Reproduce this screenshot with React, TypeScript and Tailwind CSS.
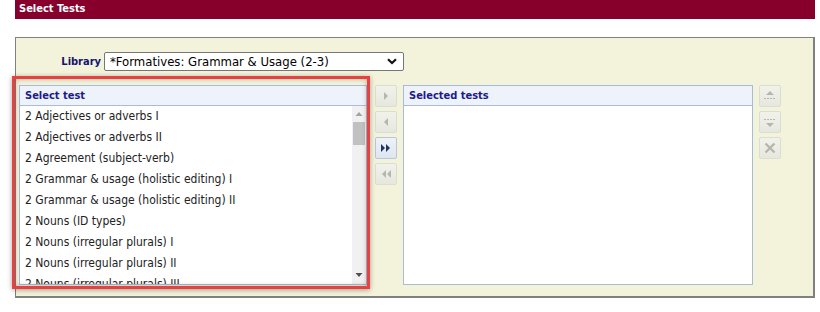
import React from "react";

const items = [
  "2 Adjectives or adverbs I",
  "2 Adjectives or adverbs II",
  "2 Agreement (subject-verb)",
  "2 Grammar & usage (holistic editing) I",
  "2 Grammar & usage (holistic editing) II",
  "2 Nouns (ID types)",
  "2 Nouns (irregular plurals) I",
  "2 Nouns (irregular plurals) II",
  "2 Nouns (irregular plurals) III",
  "2 Nouns (possessives)",
  "2 Pronouns I",
];

function Btn({ active, children }: { active?: boolean; children: React.ReactNode }) {
  return (
    <div
      className={
        "w-[22px] h-[22px] rounded-[2px] border flex items-center justify-center " +
        (active
          ? "border-[#B9C6D8] bg-gradient-to-b from-[#EEF2F8] to-[#DEE6F1]"
          : "border-[#DADDD2] bg-gradient-to-b from-[#F1F2EA] to-[#E6E8DF]")
      }
    >
      {children}
    </div>
  );
}

const G = "#B5B7AD";
const N = "#1C3561";

export default function App() {
  return (
    <div
      className="w-[820px] h-[312px] bg-white overflow-hidden text-[11px] text-[#222]"
      style={{ fontFamily: '"DejaVu Sans Condensed", "DejaVu Sans", Tahoma, sans-serif' }}
    >
      <div className="ml-[15px] mr-[5px] h-[19px] bg-[#87002B] text-white font-bold text-[11px] pl-[4px] flex items-center">
        Select Tests
      </div>
      <div className="ml-[15px] mr-[5px] mt-[18px] h-[261px] border-t border-l border-r-2 border-b-2 border-[#808080] bg-[#F3F3DB] pl-[3px]">
        <div className="flex items-center mt-[14px] h-[19px]">
          <div className="w-[82px] text-right font-bold text-[#14146E] pt-[1px]">Library</div>
          <div className="ml-[3px] w-[300px] h-[19px] bg-white border border-[#767676] rounded-[2px] flex items-center pl-[5px] pr-[6px] text-[13px] text-black">
            <span className="flex-1 truncate">*Formatives: Grammar &amp; Usage (2-3)</span>
            <svg width="10" height="7" viewBox="0 0 10 7">
              <path d="M1 1.2 L5 5 L9 1.2" fill="none" stroke="#111" strokeWidth="2.2" />
            </svg>
          </div>
        </div>
        <div className="flex mt-[14px]">
          {/* left list */}
          <div className="relative w-[348px] h-[200px]">
            <div className="w-full h-full bg-white border border-[#A8BDD5] flex flex-col">
              <div className="h-[20px] shrink-0 bg-[#EEF2FB] border-b border-[#A8BDD5] pl-[5px] pt-[1px] flex items-center font-bold text-[#1B1B8A]">
                Select test
              </div>
              <div className="flex flex-1 min-h-0">
                <div className="flex-1 overflow-hidden">
                  {items.map((t) => (
                    <div key={t} className="h-[20.9px] pl-[5px] flex items-center text-[12px] whitespace-nowrap">
                      {t}
                    </div>
                  ))}
                </div>
                <div className="w-[14px] bg-[#F1F1F1] flex flex-col items-center">
                  <svg width="14" height="14" viewBox="0 0 14 14" className="mt-[1px]">
                    <path d="M3.5 9 L7 5 L10.5 9 Z" fill="#A3A3A3" />
                  </svg>
                  <div className="w-[12px] h-[23px] bg-[#C1C1C1] mt-[1px]" />
                  <div className="flex-1" />
                  <svg width="14" height="14" viewBox="0 0 14 14" className="mb-[2px]">
                    <path d="M3.5 5 L7 9 L10.5 5 Z" fill="#505050" />
                  </svg>
                </div>
              </div>
            </div>
            <div className="absolute top-[-9px] left-[-7px] right-[-3px] bottom-[-4px] border-[3px] border-[#E8413F] shadow-[inset_0_0_5px_rgba(0,0,0,0.28),0_1px_5px_rgba(0,0,0,0.35)] pointer-events-none" />
          </div>
          {/* move buttons */}
          <div className="ml-[8px] flex flex-col gap-[4px]">
            <Btn>
              <svg width="8" height="10" viewBox="0 0 8 10"><path d="M2 1 L6 5 L2 9 Z" fill={G} /></svg>
            </Btn>
            <Btn>
              <svg width="8" height="10" viewBox="0 0 8 10"><path d="M6 1 L2 5 L6 9 Z" fill={G} /></svg>
            </Btn>
            <Btn active>
              <svg width="12" height="10" viewBox="0 0 12 10">
                <path d="M1 1 L5 5 L1 9 Z M6 1 L10 5 L6 9 Z" fill={N} />
              </svg>
            </Btn>
            <Btn>
              <svg width="12" height="10" viewBox="0 0 12 10">
                <path d="M6 1 L2 5 L6 9 Z M11 1 L7 5 L11 9 Z" fill={G} />
              </svg>
            </Btn>
          </div>
          {/* right list */}
          <div className="ml-[6px] w-[350px] h-[200px] bg-white border border-[#A8BDD5] flex flex-col">
            <div className="h-[20px] shrink-0 bg-[#EEF2FB] border-b border-[#A8BDD5] pl-[5px] pt-[1px] flex items-center font-bold text-[#1B1B8A]">
              Selected tests
            </div>
          </div>
          {/* order buttons */}
          <div className="ml-[6px] flex flex-col gap-[4px]">
            <Btn>
              <svg width="16" height="14" viewBox="0 0 16 14">
                <path d="M4 6 L8 2 L12 6 Z" fill={G} />
                <path d="M2 9.5 H14" stroke={G} strokeWidth="1" strokeDasharray="2 1" />
              </svg>
            </Btn>
            <Btn>
              <svg width="16" height="14" viewBox="0 0 16 14">
                <path d="M2 4.5 H14" stroke={G} strokeWidth="1" strokeDasharray="2 1" />
                <path d="M4 8 L8 12 L12 8 Z" fill={G} />
              </svg>
            </Btn>
            <Btn>
              <svg width="14" height="14" viewBox="0 0 14 14">
                <path d="M2.5 2.5 L11.5 11.5 M11.5 2.5 L2.5 11.5" stroke={G} strokeWidth="2.4" />
              </svg>
            </Btn>
          </div>
        </div>
      </div>
    </div>
  );
}
